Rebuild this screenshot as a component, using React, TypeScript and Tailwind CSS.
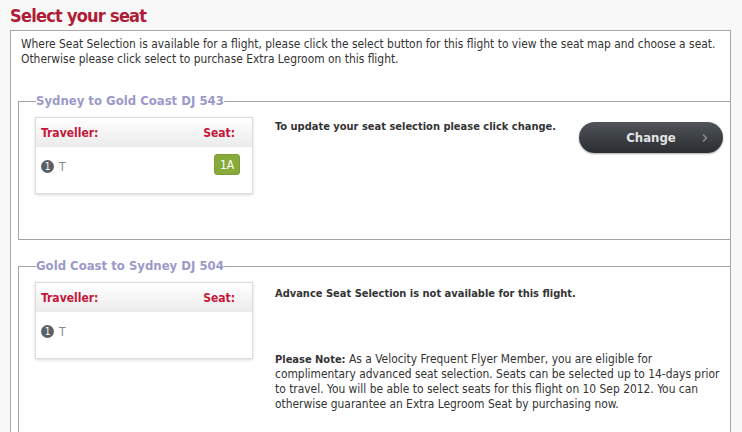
import { ChevronRight } from 'lucide-react';

interface FlightProps {
  title: string;
  seat?: string;
  fixed?: boolean;
  children: React.ReactNode;
}

function TravellerCard({ seat }: { seat?: string }) {
  return (
    <div className="w-[218px] shrink-0 border border-[#dcdcdc] bg-white shadow-[0_1px_3px_rgba(0,0,0,0.15)]">
      <div className="flex items-center justify-between h-[29px] px-[5px] bg-gradient-to-b from-white to-[#ebebeb] text-[12px] font-bold text-[#c4163a]">
        <span>Traveller:</span>
        <span className="mr-[12px]">Seat:</span>
      </div>
      <div className="flex items-start justify-between h-[46px] pt-[7px] pl-[5px] pr-[12px]">
        <div className="flex items-center gap-[5px] h-[21px] mt-[2px]">
          <span className="flex items-center justify-center w-[13px] h-[13px] rounded-full bg-[#5b5f64] text-[10px] leading-none text-white">1</span>
          <span className="text-[12px] text-[#888]">T</span>
        </div>
        {seat && (
          <span className="flex items-center justify-center w-[26px] h-[21px] rounded-[3px] bg-[#88aa3a] border border-[#7d9d33] text-[12px] text-white">
            {seat}
          </span>
        )}
      </div>
    </div>
  );
}

function Flight({ title, seat, fixed, children }: FlightProps) {
  return (
    <fieldset className={`${fixed ? 'h-[147px]' : 'pb-[30px]'} shrink-0 border-l border-t border-b border-[#a3a3a3] pl-[16px] pt-[8px]`}>
      <legend className="px-0 ml-[1px] text-[13px] leading-[16px] font-bold text-[#9b99c9]">{title}</legend>
      <div className="flex items-start gap-[22px]">
        <TravellerCard seat={seat} />
        {children}
      </div>
    </fieldset>
  );
}

export default function App() {
  return (
    <div className="min-h-[432px] bg-[#f8f8f8] px-[10px] font-['DejaVu_Sans_Condensed','DejaVu_Sans',sans-serif] text-[#333]">
      <h1 className="pt-[4px] h-[30px] text-[18px] font-bold leading-[24px] tracking-[-0.75px] text-[#b01c35]">Select your seat</h1>
      <div className="w-[721px] h-[402px] overflow-hidden border-l border-t border-r border-[#a9a9a9] bg-white pl-[7px]">
        <p className="pl-[3px] pt-[6px] text-[11.9px] leading-[15px] text-[#333]">
          Where Seat Selection is available for a flight, please click the select button for this flight to view the seat map and choose a seat.
          <br />
          Otherwise please click select to purchase Extra Legroom on this flight.
        </p>

        <div className="mt-[26px] flex flex-col gap-[18px]">
          <Flight title="Sydney to Gold Coast DJ 543" seat="1A" fixed>
            <div className="flex flex-1 items-start justify-between pr-[7px] pt-[2px]">
              <p className="text-[11px] font-bold text-[#333]">To update your seat selection please click change.</p>
              <button className="relative mt-[3px] flex items-center justify-center w-[144px] h-[31px] rounded-full bg-gradient-to-b from-[#50555b] to-[#2a2d31] shadow-[0_1px_2px_rgba(0,0,0,0.35)] text-[13px] font-bold text-[#e4e4e4]">
                Change
                <ChevronRight className="absolute right-[12px] w-[12px] h-[12px] text-[#8a8d91]" strokeWidth={3} />
              </button>
            </div>
          </Flight>

          <Flight title="Gold Coast to Sydney DJ 504">
            <div className="flex-1 pr-[7px] pt-[4px] leading-[15px] text-[#333]">
              <p className="text-[11px] font-bold">Advance Seat Selection is not available for this flight.</p>
              <p className="mt-[51px] text-[11.9px]">
                <b className="text-[11px]">Please Note:</b> As a Velocity Frequent Flyer Member, you are eligible for
                <br />
                complimentary advanced seat selection. Seats can be selected up to 14-days prior
                <br />
                to travel. You will be able to select seats for this flight on 10 Sep 2012. You can
                <br />
                otherwise guarantee an Extra Legroom Seat by purchasing now.
              </p>
            </div>
          </Flight>
        </div>
      </div>
    </div>
  );
}
